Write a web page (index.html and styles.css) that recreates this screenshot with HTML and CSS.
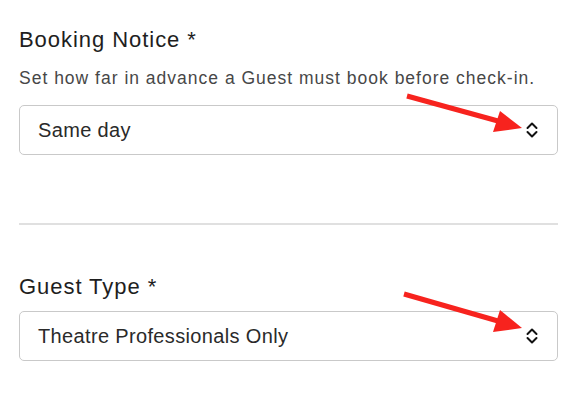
FILE: index.html
```html
<!DOCTYPE html>
<html lang="en">
<head>
    <meta charset="UTF-8">
    <meta name="viewport" content="width=device-width, initial-scale=1.0">
    <title>Booking Settings</title>
    <link rel="stylesheet" href="styles.css">
</head>
<body>

<div class="field field-first">
    <label class="field-label">Booking Notice *</label>
    <p class="field-help">Set how far in advance a Guest must book before check-in.</p>
    <div class="select">
        <span>Same day</span>
        <svg class="chevrons" width="12" height="16" viewBox="0 0 12 16">
            <polyline points="1.5,6 6,1.5 10.5,6" />
            <polyline points="1.5,10 6,14.5 10.5,10" />
        </svg>
        <!-- annotation arrow -->
        <svg class="pointer pointer-one" width="130" height="50" viewBox="0 0 130 50">
            <line x1="9" y1="5" x2="100" y2="30" />
            <polygon points="124,37 102,20 95,41" />
        </svg>
    </div>
</div>

<hr class="divider">

<div class="field field-last">
    <label class="field-label">Guest Type *</label>
    <div class="select">
        <span>Theatre Professionals Only</span>
        <svg class="chevrons" width="12" height="16" viewBox="0 0 12 16">
            <polyline points="1.5,6 6,1.5 10.5,6" />
            <polyline points="1.5,10 6,14.5 10.5,10" />
        </svg>
        <svg class="pointer pointer-two" width="130" height="50" viewBox="0 0 130 50">
            <line x1="6" y1="8" x2="100" y2="35" />
            <polygon points="124,42 102,24 95,46" />
        </svg>
    </div>
</div>

</body>
</html>
```

FILE: styles.css
```css
body {
    font-family: "Liberation Sans", Arial, sans-serif;
    background-color: #fff;
    color: #222;
    margin: 0;
    padding: 0 18px 0 19px;
}

.field-label {
    display: block;
    font-size: 22px;
    line-height: 26px;
    letter-spacing: 0.95px;
    color: #1e1e1e;
}

.field-first {
    padding-top: 27px;
}

.field-help {
    font-size: 17.5px;
    line-height: 20px;
    letter-spacing: 1px;
    color: #474747;
    margin: 15px 0 17px;
}

.select {
    position: relative;
    display: flex;
    justify-content: space-between;
    align-items: center;
    height: 48px;
    padding: 0 19px 0 18px;
    border: 1px solid #c9c9c9;
    border-radius: 5px;
    font-size: 20px;
    letter-spacing: 0.35px;
    color: #2a2a2a;
}

.field-last .select {
    margin-top: 11px;
}

.chevrons {
    fill: none;
    stroke: #111;
    stroke-width: 2;
    stroke-linecap: round;
    stroke-linejoin: round;
}

.divider {
    border: none;
    border-top: 2px solid #e0e0e0;
    margin: 68px 0 49px;
}

/* red annotation arrows */
.pointer {
    position: absolute;
    right: 29px;
}

.pointer line {
    stroke: #f7231e;
    stroke-width: 5;
}

.pointer polygon {
    fill: #f7231e;
}

.pointer-one {
    top: -15px;
}

.pointer-two {
    top: -26px;
}
```
